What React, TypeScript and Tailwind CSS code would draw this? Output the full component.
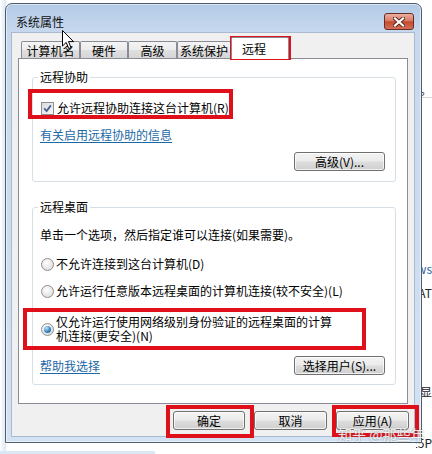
import React from 'react';

const TABS = [
  { label: '计算机名', w: 'w-[59px]' },
  { label: '硬件', w: 'w-[48px]' },
  { label: '高级', w: 'w-[49px]' },
  { label: '系统保护', w: 'w-[54px]' },
];

const btn =
  'flex h-[19px] items-center justify-center rounded-[3px] border border-[#707070] bg-[linear-gradient(#f3f3f3_0%,#ebebeb_48%,#dddddd_52%,#cfcfcf_100%)] shadow-[inset_0_0_0_1px_rgba(255,255,255,0.7)] text-[12px] leading-none text-black';

function CheckBox() {
  return (
    <span className="flex h-[13px] w-[13px] shrink-0 items-center justify-center border border-[#8f8f8f] bg-[linear-gradient(135deg,#d8dbe0,#f7f7f7)]">
      <svg width="9" height="9" viewBox="0 0 9 9">
        <path d="M1.2 4.4 L3.6 7 L7.9 1.4" stroke="#4b5f8f" strokeWidth="1.8" fill="none" />
      </svg>
    </span>
  );
}

function Radio({ on }: { on?: boolean }) {
  return (
    <span className="flex h-[13px] w-[13px] shrink-0 items-center justify-center rounded-full border border-[#8f8f8f] bg-[radial-gradient(circle_at_40%_35%,#ffffff,#d5d5d5)]">
      {on && (
        <span className="h-[7px] w-[7px] rounded-full bg-[radial-gradient(circle_at_35%_30%,#bfe6fb,#3a86c0_55%,#1d4f7e)]" />
      )}
    </span>
  );
}

function RedBox({ className }: { className: string }) {
  return <div className={`pointer-events-none absolute border-[4px] border-[#e0101a] ${className}`} />;
}

export default function App() {
  return (
    <div className="relative h-[454px] w-[432px] overflow-hidden bg-white font-['Noto_Sans_CJK_SC',sans-serif] text-[12px] leading-[16px] text-black">
      {/* desktop behind the dialog */}
      <div className="flex h-full flex-col">
        <div className="flex flex-1">
          <div className="w-[6px] bg-[linear-gradient(90deg,#ffffff,#dbe6f3)]" />
          <div className="flex-1" />
          <div className="flex w-[16px] flex-col overflow-hidden text-[12px] text-[#222]">
            <div className="mt-[82px] flex h-[16px] justify-end whitespace-nowrap border-b border-[#d6d6d6]">on。</div>
            <div className="mt-[163px] flex h-[16px] justify-end whitespace-nowrap text-[#2d62a3]">ows</div>
            <div className="mt-[8px] flex h-[16px] justify-end whitespace-nowrap">AT</div>
            <div className="mt-[83px] flex h-[16px] justify-end whitespace-nowrap">示显</div>
            <div className="mt-[35px] flex h-[16px] justify-end whitespace-nowrap">25P</div>
          </div>
        </div>
        <div className="flex h-[11px]">
          <div className="w-[155px] bg-[#dce7f4]" />
          <div className="flex-1 bg-white" />
        </div>
      </div>

      {/* dialog window */}
      <div className="absolute left-[5px] top-[3px] flex h-[440px] w-[417px] flex-col rounded-t-[7px] border border-[#4f5c6b] bg-[linear-gradient(#b3cae6,#c7d8ee_28px,#d3e2f3)] shadow-[inset_0_0_0_1px_rgba(255,255,255,0.55)]">
        <div className="flex h-[29px] shrink-0">
          <span className="ml-[10px] mt-[10px] text-[12px] leading-[16px] text-[#111]">系统属性</span>
          <button className="ml-auto mr-[7px] mt-[9px] flex h-[17px] w-[30px] items-center justify-center rounded-[3px] border border-[#6a2c20] bg-[linear-gradient(#eab0a2,#d97c66_45%,#c44a30_52%,#d46f58)]">
            <svg width="12" height="10" viewBox="0 0 12 10">
              <path d="M2 1.5 L10 8.5 M10 1.5 L2 8.5" stroke="#5a2418" strokeWidth="4" strokeLinecap="square" />
              <path d="M2 1.5 L10 8.5 M10 1.5 L2 8.5" stroke="#ffffff" strokeWidth="2.2" strokeLinecap="square" />
            </svg>
          </button>
        </div>

        <div className="ml-[6px] flex h-[403px] w-[402px] flex-col bg-[#f0f0f0] px-[6px] pt-[4px] shadow-[0_0_0_1px_#a9bad0]">
          {/* tabs */}
          <div className="flex h-[21px] items-end pl-[3px]">
            {TABS.map((t) => (
              <div
                key={t.label}
                className={`${t.w} flex h-[17px] items-center justify-center rounded-t-[2px] border border-b-0 border-[#898c95] bg-[linear-gradient(#f4f4f4,#ececec_50%,#dfdfdf_52%,#d6d6d6)] pt-px`}
              >
                {t.label}
              </div>
            ))}
            <div className="relative z-10 -mb-px flex h-[22px] w-[58px] items-center rounded-t-[2px] border border-b-0 border-[#898c95] bg-white pl-[10px]">
              远程
            </div>
          </div>

          {/* tab panel */}
          <div className="flex h-[346px] flex-col border border-[#898c95] bg-white pl-[13px] pr-[11px] pt-[10px]">
            <fieldset className="rounded-[3px] border border-[#d5dfe5]">
              <legend className="ml-[5px] px-[2px] leading-[16px]">远程协助</legend>
              <div className="flex flex-col pb-[10px] pl-[7px] pr-[10px]">
                <label className="mt-[15px] flex h-[16px] items-center gap-[3px] pl-px">
                  <CheckBox />
                  <span>允许远程协助连接这台计算机(R)</span>
                </label>
                <a className="mt-[11px] h-[16px] self-start text-[#1b68a6] underline underline-offset-2">有关启用远程协助的信息</a>
                <div className="mt-[9px] flex justify-end">
                  <button className={`${btn} w-[91px]`}>高级(V)...</button>
                </div>
              </div>
            </fieldset>

            <fieldset className="mt-[17px] rounded-[3px] border border-[#d5dfe5]">
              <legend className="ml-[5px] px-[2px] leading-[16px]">远程桌面</legend>
              <div className="flex flex-col pb-[9px] pl-[7px] pr-[10px]">
                <p className="mt-[12px] h-[16px]">单击一个选项，然后指定谁可以连接(如果需要)。</p>
                <label className="mt-[13px] flex h-[16px] items-center gap-[2px] pl-px">
                  <Radio />
                  <span>不允许连接到这台计算机(D)</span>
                </label>
                <label className="mt-[11px] flex h-[16px] items-center gap-[2px] pl-px">
                  <Radio />
                  <span>允许运行任意版本远程桌面的计算机连接(较不安全)(L)</span>
                </label>
                <label className="mt-[16px] flex h-[28px] items-center gap-[2px] pl-px">
                  <Radio on />
                  <span className="leading-[14px]">
                    仅允许运行使用网络级别身份验证的远程桌面的计算
                    <br />
                    机连接(更安全)(N)
                  </span>
                </label>
                <div className="mt-[13px] flex h-[19px] items-center justify-between">
                  <a className="text-[#1b68a6] underline underline-offset-2">帮助我选择</a>
                  <button className={`${btn} w-[91px]`}>选择用户(S)...</button>
                </div>
              </div>
            </fieldset>
          </div>

          {/* dialog buttons */}
          <div className="-mr-px mt-[7px] flex justify-end gap-[9px]">
            <button className={`${btn} w-[72px] border-[#3c7fb1] shadow-[inset_0_0_0_1px_#bfe3f7]`}>确定</button>
            <button className={`${btn} w-[73px]`}>取消</button>
            <button className={`${btn} w-[73px]`}>应用(A)</button>
          </div>
        </div>
      </div>

      {/* annotations */}
      <RedBox className="left-[230px] top-[36px] h-[24px] w-[61px]" />
      <RedBox className="left-[28px] top-[89px] h-[30px] w-[205px]" />
      <RedBox className="left-[23px] top-[308px] h-[42px] w-[343px]" />
      <RedBox className="left-[166px] top-[405px] h-[33px] w-[88px]" />
      <RedBox className="left-[332px] top-[405px] h-[32px] w-[87px]" />

      <span className="absolute left-[338px] top-[427px] whitespace-nowrap text-[14px] leading-[15px] text-white/85 [text-shadow:0_0_2px_rgba(80,80,80,0.7)]">
        知乎 @那些年
      </span>

      {/* mouse pointer */}
      <svg className="absolute left-[62px] top-[30px]" width="13" height="20" viewBox="0 0 13 20">
        <path d="M0.5 0.5 L0.5 16 L4.2 12.4 L6.8 18.6 L9 17.6 L6.5 11.6 L11.5 11.6 Z" fill="#ffffff" stroke="#000000" strokeWidth="1" strokeLinejoin="round" />
      </svg>
    </div>
  );
}
